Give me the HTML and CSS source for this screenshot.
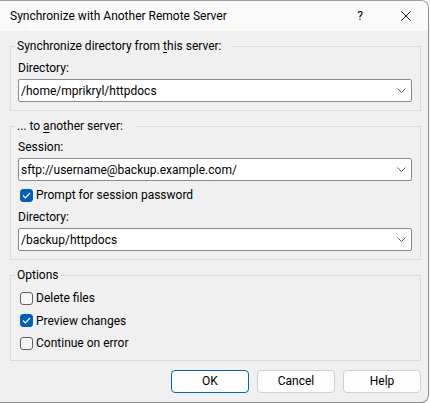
FILE: index.html
```html
<!DOCTYPE html>
<html>
<head>
<meta charset="utf-8">
<link rel="stylesheet" href="styles.css">
</head>
<body>
<div class="window">
  <div class="titlebar">
    <span class="title">Synchronize with Another Remote Server</span>
    <span class="help-btn">?</span>
    <svg class="close-btn" width="10" height="10" viewBox="0 0 10 10"><path d="M0.5 0.5L9.5 9.5M9.5 0.5L0.5 9.5" stroke="#1a1a1a" stroke-width="1" fill="none"/></svg>
  </div>
  <div class="content">
    <div class="group g1">
      <div class="legend">Synchronize directory from <u>t</u>his server:</div>
      <div class="label l1">Directory:</div>
      <div class="combo"><span class="val">/home/mprikryl/httpdocs</span><svg class="chev" width="9" height="5" viewBox="0 0 9 5"><path d="M0.5 0.5L4.5 4.5L8.5 0.5" stroke="#5d5d5d" stroke-width="1" fill="none"/></svg></div>
    </div>
    <div class="group g2">
      <div class="legend">... to <u>a</u>nother server:</div>
      <div class="label l2">Session:</div>
      <div class="combo"><span class="val">sftp://username@backup.example.com/</span><svg class="chev" width="9" height="5" viewBox="0 0 9 5"><path d="M0.5 0.5L4.5 4.5L8.5 0.5" stroke="#5d5d5d" stroke-width="1" fill="none"/></svg></div>
      <div class="check c-prompt"><span class="box checked"><svg width="9" height="7" viewBox="0 0 9 7"><path d="M1 3.5L3.3 5.8L8 1" stroke="#fff" stroke-width="1.2" fill="none"/></svg></span><span>Prompt for session password</span></div>
      <div class="label l3">Directory:</div>
      <div class="combo"><span class="val">/backup/httpdocs</span><svg class="chev" width="9" height="5" viewBox="0 0 9 5"><path d="M0.5 0.5L4.5 4.5L8.5 0.5" stroke="#5d5d5d" stroke-width="1" fill="none"/></svg></div>
    </div>
    <div class="group g3">
      <div class="legend">Options</div>
      <div class="check row first"><span class="box"></span><span>Delete files</span></div>
      <div class="check row"><span class="box checked"><svg width="9" height="7" viewBox="0 0 9 7"><path d="M1 3.5L3.3 5.8L8 1" stroke="#fff" stroke-width="1.2" fill="none"/></svg></span><span>Preview changes</span></div>
      <div class="check row"><span class="box"></span><span>Continue on error</span></div>
    </div>
    <div class="buttons">
      <div class="btn default">OK</div>
      <div class="btn">Cancel</div>
      <div class="btn">Help</div>
    </div>
  </div>
</div>
</body>
</html>
```
FILE: styles.css
```css
html, body {
  margin: 0;
  padding: 0;
  background: #ffffff;
}
body {
  font-family: Roboto, "Noto Sans", sans-serif;
  font-size: 12px;
  color: #000;
}
.window {
  width: 428px;
  height: 401px;
  background: #f0f0f0;
  border-top: 1px solid #a0a0a0;
  border-right: 1px solid #8c8c8c;
  border-bottom: 1px solid #8c8c8c;
  border-radius: 0 8px 8px 0;
  overflow: hidden;
}
.titlebar {
  height: 30px;
  background: #fafafa;
  display: flex;
  align-items: center;
  padding-left: 10px;
  padding-right: 17px;
}
.title {
  line-height: 16px;
}
.help-btn {
  margin-left: auto;
  width: 6px;
  text-align: center;
  line-height: 16px;
}
.close-btn {
  margin-left: 38px;
  display: block;
}
.content {
  padding: 15px 7px 0 10px;
}
.group {
  border: 1px solid #dcdcdc;
  padding: 0 8px 0 7px;
}
.group + .group {
  margin-top: 15px;
}
.legend {
  display: table;
  height: 16px;
  line-height: 16px;
  margin-top: -9px;
  margin-left: -3px;
  padding: 0 10px 0 2px;
  background: #f0f0f0;
}
.g2 .legend { padding-right: 12px; }
.g3 .legend { padding-right: 2px; }
.legend u {
  text-underline-offset: 2px;
}
.label {
  height: 16px;
  line-height: 16px;
}
.l1 { margin-top: 6px; }
.l2 { margin-top: 5px; }
.l3 { margin-top: 6px; }
.combo {
  height: 21px;
  margin-top: 3px;
  background: #fff;
  border: 1px solid #8a8a8a;
  border-radius: 2px;
  display: flex;
  align-items: center;
  padding: 0 4px 0 2px;
}
.combo .val {
  flex: 1;
  line-height: 16px;
}
.chev {
  display: block;
  margin-right: 1px;
}
.g1 { padding-bottom: 8px; }
.g2 { padding-bottom: 8px; }
.check {
  display: flex;
  align-items: center;
  gap: 3px;
  height: 22.5px;
  line-height: 16px;
}
.c-prompt { margin-top: 6px; height: 16px; }
.box {
  width: 11px;
  height: 11px;
  margin-left: 2px;
  border: 1px solid #5f5f5f;
  border-radius: 3px;
  background: #f7f7f7;
  display: flex;
  align-items: center;
  justify-content: center;
}
.box.checked {
  background: #005fb8;
  border-color: #005fb8;
}
.box svg { display: block; }
.g3 { padding-bottom: 5.5px; }
.g3 .first { margin-top: 4px; }
.buttons {
  display: flex;
  justify-content: flex-end;
  gap: 8px;
  margin-top: 9px;
}
.btn {
  width: 76px;
  height: 21px;
  line-height: 21px;
  text-align: center;
  background: #fdfdfd;
  border: 1px solid #d0d0d0;
  border-radius: 4px;
}
.btn.default {
  border-color: #0067c0;
}
```
